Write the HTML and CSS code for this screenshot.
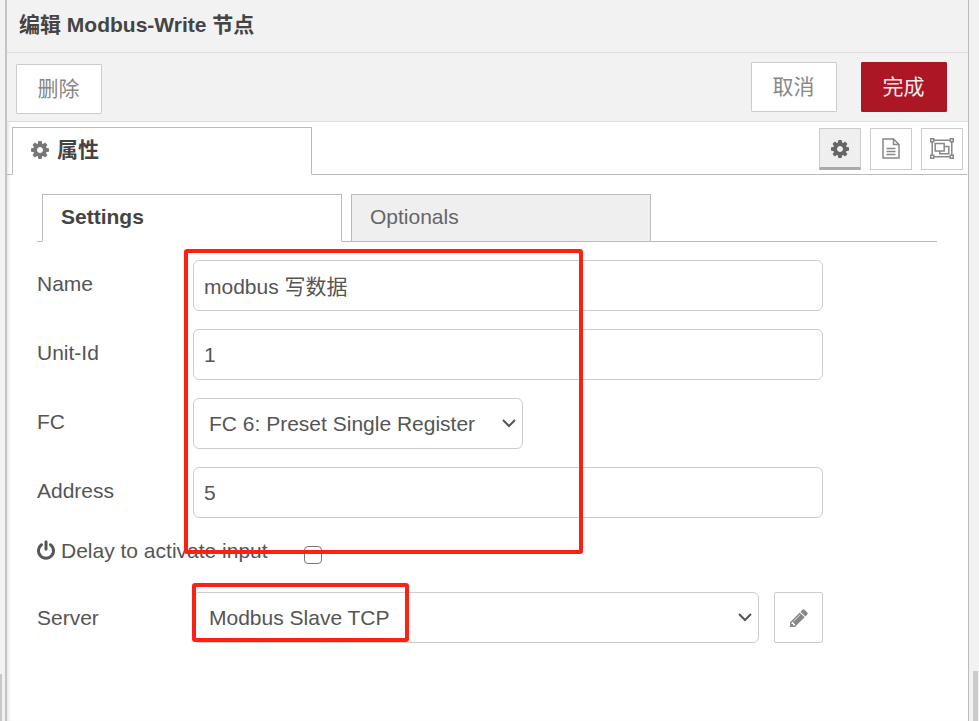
FILE: index.html
```html
<!DOCTYPE html>
<html lang="zh-CN">
<head>
<meta charset="utf-8">
<title>编辑 Modbus-Write 节点</title>
<link rel="stylesheet" href="styles.css">
</head>
<body>
<svg class="defs" aria-hidden="true">
  <symbol id="cog" viewBox="0 128 1536 1536"><path d="M1024 896q0-106-75-181t-181-75-181 75-75 181 75 181 181 75 181-75 75-181zm512-109v222q0 12-8 23t-20 13l-185 28q-19 54-39 91 35 50 107 138 10 12 10 25t-9 23q-27 37-99 108t-94 71q-12 0-26-9l-138-108q-44 23-91 38-16 136-29 186-7 28-36 28h-222q-14 0-24.500-8.500t-11.500-21.500l-28-184q-49-16-90-37l-141 107q-10 9-25 9-14 0-25-11-126-114-165-168-7-10-7-23 0-12 8-23 15-21 51-66.500t54-70.500q-27-50-41-99l-183-27q-13-2-21-12.500t-8-23.500v-222q0-12 8-23t19-13l186-28q14-46 39-92-40-57-107-138-10-12-10-24 0-10 9-23 26-36 98.500-107.500t94.500-71.500q13 0 26 10l138 107q44-23 91-38 16-136 29-186 7-28 36-28h222q14 0 24.500 8.500t11.500 21.500l28 184q49 16 90 37l142-107q9-9 24-9 13 0 25 10 129 119 165 170 7 8 7 22 0 12-8 23-15 21-51 66.500t-54 70.500q26 50 41 98l183 28q13 2 21 12.500t8 23.500z"/></symbol>
</svg>
<div class="workspace">
  <div class="rail rail-left"><div class="thumb"></div></div>
  <main class="tray">
    <header class="title">编辑 Modbus-Write 节点</header>
    <div class="toolbar">
      <button class="btn delete">删除</button>
      <button class="btn cancel">取消</button>
      <button class="btn primary">完成</button>
    </div>
    <div class="tabs">
      <div class="tab active"><svg class="cog"><use href="#cog"/></svg><span>属性</span></div>
      <div class="tab-buttons">
        <button class="icon-btn selected"><svg class="cog"><use href="#cog"/></svg></button>
        <button class="icon-btn"><svg class="doc" viewBox="0 0 18 21"><path d="M1 1h10.500l5.500 5.500v13.500h-16zM11.500 1v5.500h5.500M4.500 10.500h9M4.500 13.500h9M4.500 16.500h9"/></svg></button>
        <button class="icon-btn"><svg class="group" viewBox="0 0 24 21"><path d="M4 2.200h16M4 18.800h16M2.200 4v13M21.800 4v13M.7.700h3v3h-3zM20.300.7h3v3h-3zM.7 17.300h3v3h-3zM20.300 17.300h3v3h-3zM5.200 5.500h9v7.500h-9zM14.500 8.500h4.300v7.300h-9v-2.500"/></svg></button>
      </div>
    </div>
    <div class="content">
      <div class="subtabs">
        <div class="tab active">Settings</div>
        <div class="tab">Optionals</div>
      </div>
      <form class="form">
        <div class="row"><label>Name</label><div class="field">modbus 写数据</div></div>
        <div class="row"><label>Unit-Id</label><div class="field number">1</div></div>
        <div class="row"><label>FC</label><div class="field select fc"><span>FC 6: Preset Single Register</span><svg class="chevron" viewBox="0 0 14 9"><path d="M1 1l6 6 6-6"/></svg></div></div>
        <div class="row"><label>Address</label><div class="field number">5</div></div>
        <div class="row delay"><svg class="power" viewBox="128 0 1536 1664"><path d="M1664 896q0 156-61 298t-164 245-245 164-298 61-298-61-245-164-164-245-61-298q0-182 80.500-343t226.500-270q43-32 95.500-25t83.500 50q32 42 24.500 94.500t-49.500 84.500q-98 74-151.500 181t-53.500 228q0 104 40.500 198.500t109.500 163.500 163.500 109.500 198.500 40.500 198.500-40.500 163.500-109.500 109.500-163.500 40.500-198.500q0-121-53.500-228t-151.500-181q-42-32-49.500-84.500t24.500-94.500q31-43 84-50t95 25q146 109 226.500 270t80.500 343zm-640-768v640q0 52-38 90t-90 38-90-38-38-90v-640q0-52 38-90t90-38 90 38 38 90z"/></svg><label>Delay to activate input</label><span class="checkbox"></span></div>
        <div class="row server-row"><label>Server</label><div class="field select server"><span>Modbus Slave TCP</span><svg class="chevron" viewBox="0 0 14 9"><path d="M1 1l6 6 6-6"/></svg></div><button type="button" class="edit"><svg viewBox="128 128 1536 1536"><path d="M491 1536l91-91-235-235-91 91v107h128v128h107zm523-928q0-22-22-22-10 0-17 7l-542 542q-7 7-7 17 0 22 22 22 10 0 17-7l542-542q7-7 7-17zm-54-192l416 416-832 832h-416v-416zm683 96q0 53-37 90l-166 166-416-416 166-165q36-38 90-38 53 0 91 38l235 234q37 39 37 91z"/></svg></button></div>
      </form>
    </div>
  </main>
  <div class="rail rail-right"><div class="thumb"></div></div>
  <div class="mark mark-fields"></div>
  <div class="mark mark-server"></div>
</div>
</body>
</html>
```
FILE: styles.css
```css
* { box-sizing: border-box; }
body {
  margin: 0;
  background: #f2f2f2;
  color: #555;
  font: 21px/30px "Liberation Sans", "Noto Sans CJK SC", sans-serif;
}
button { font: inherit; padding: 0; }
.defs { position: absolute; width: 0; height: 0; }
.workspace { position: relative; display: flex; width: 979px; height: 721px; overflow: hidden; }
.rail { display: flex; align-items: flex-end; background: #f2f2f2; }
.rail-left { width: 7px; border-right: 2px solid #c4c4c4; }
.rail-left .thumb { width: 2px; height: 47px; background: #c8c8c8; }
.rail-right { width: 11px; border-left: 1px solid #bbb; justify-content: flex-end; padding-right: 1px; }
.rail-right .thumb { width: 5px; height: 50px; background: #cbcbcb; }
.tray { flex: 1; background: #fff; box-shadow: inset 4px 0 4px -3px #ddd; }

.title { height: 53px; padding: 10px 12px; background: #f2f2f2; border-bottom: 1px solid #ddd; color: #444; font-weight: bold; }
.toolbar { display: flex; height: 69px; padding: 9px 21px 0 9px; background: #f2f2f2; border-bottom: 1px solid #ddd; }
.btn { width: 86px; height: 50px; padding-right: 1px; border: 1px solid #ccc; border-radius: 1px; background: #fff; color: #888; }
.delete { margin: 2px auto 0 0; }
.primary { margin-left: 24px; border-color: #ad1625; background: #ad1625; color: #eee; }

.tabs { display: flex; justify-content: space-between; height: 53px; padding: 5px 4px 0 5px; background: linear-gradient(#bbb, #bbb) bottom / 100% 1px no-repeat; margin-right: 1px; }
.tab { width: 300px; border: 1px solid #bbb; background: #efefef; padding: 7px 18px; color: #666; }
.tab.active { background: #fff; border-bottom-color: #fff; color: #444; font-weight: bold; }
.tabs .tab { display: flex; gap: 8px; padding-top: 7px; color: #444; }
.cog { width: 18px; height: 18px; fill: #777; }
.tabs .tab .cog { margin-top: 6px; }
.tab-buttons { display: flex; gap: 9px; padding-top: 1px; }
.icon-btn { display: flex; align-items: center; justify-content: center; width: 42px; height: 42px; border: 1px solid #ccc; background: #fff; }
.icon-btn.selected { background: #efefef; border-bottom: 3px solid #aaa; }
.selected .cog { fill: #666; margin-top: 1px; }
.doc, .group { fill: none; stroke: #888; stroke-width: 1.500; margin-bottom: 1px; }
.doc { width: 18px; height: 21px; }
.group { width: 24px; height: 21px; }

.content { padding: 19px 31px 0 30px; }
.subtabs { display: flex; gap: 9px; height: 48px; padding-left: 5px; background: linear-gradient(#bbb, #bbb) bottom / 100% 1px no-repeat; }
.form { padding-top: 18px; width: 786px; }
.row { display: flex; height: 51px; margin-bottom: 18px; }
.row label { width: 156px; padding-top: 9px; flex: none; }
.field { flex: 1; height: 51px; padding: 11px 10px; border: 1px solid #ccc; border-radius: 6px; background: #fff; }
.number { padding-top: 10px; }
.server-row label { padding-top: 11px; }
.select { display: flex; justify-content: space-between; align-items: center; padding: 0 6px 0 15px; }
.fc { flex: none; width: 330px; }
.chevron { width: 14px; height: 9px; fill: none; stroke: #555; stroke-width: 2; }
.row.delay { height: 38px; align-items: flex-start; }
.power { width: 18px; height: 20px; margin: 4px 6px 0 0; fill: #555; }
.delay label { width: 243px; padding: 0; }
.checkbox { width: 18px; height: 18px; margin-top: 10px; border: 1.500px solid #767676; border-radius: 4px; background: #fff; }
.edit { display: flex; align-items: center; justify-content: center; width: 49px; margin-left: 15px; border: 1px solid #ccc; border-radius: 2px; background: #fff; }
.edit svg { width: 18px; height: 18px; fill: #888; }

.mark { position: absolute; border: 4px solid #ff2014; border-radius: 3px; }
.mark-fields { left: 184px; top: 249px; width: 399px; height: 305px; }
.mark-server { left: 192px; top: 583px; width: 217px; height: 59px; }
```
